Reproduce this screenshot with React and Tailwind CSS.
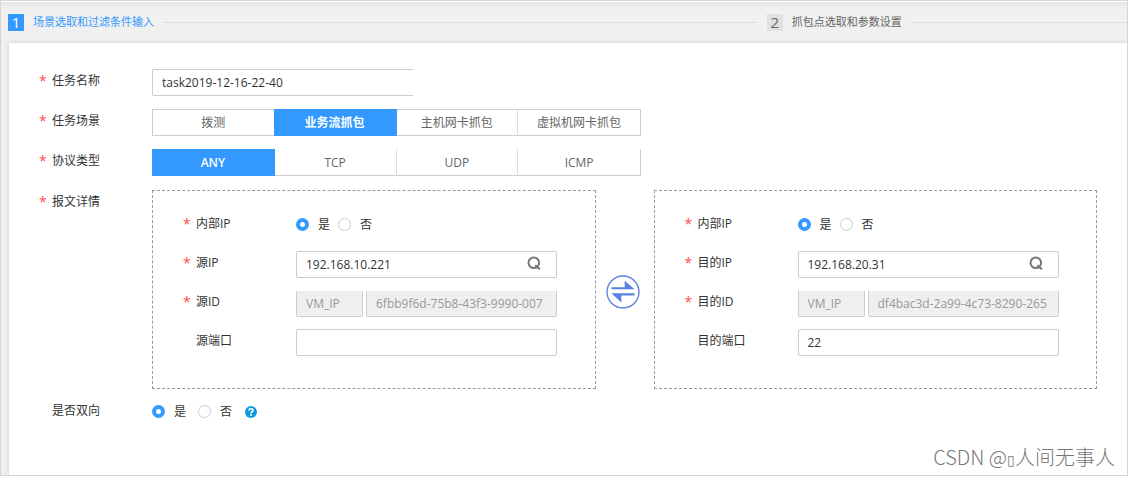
import React, { useState } from 'react';
import clsx from 'clsx';

const SCENES = ['拨测', '业务流抓包', '主机网卡抓包', '虚拟机网卡抓包'];
const PROTOCOLS = ['ANY', 'TCP', 'UDP', 'ICMP'];

const SearchIcon = () => (
  <svg viewBox="0 0 14 14" className="h-[14px] w-[14px]" fill="none" stroke="#777" strokeWidth="2">
    <circle cx="6.8" cy="6.8" r="5.3" />
    <path d="M8.2 9.4 L13 13.2" />
  </svg>
);

const SwapIcon = () => (
  <svg viewBox="0 0 100 100" className="h-[34px] w-[34px]" fill="#5b80e0">
    <circle cx="50" cy="50" r="47" fill="none" stroke="#5b80e0" strokeWidth="4" />
    <path d="M16 36 H55 V17 L84 42 H16 Z" />
    <path d="M84 60 H45 V81 L16 54 H84 Z" />
  </svg>
);

const HelpIcon = () => (
  <svg viewBox="0 0 12 12" className="h-3 w-3">
    <circle cx="6" cy="6" r="6" fill="#0e9bdc" />
    <path d="M4 4.6 C4 2.2 8 2.2 8 4.4 C8 5.8 6 5.6 6 7.2" fill="none" stroke="#fff" strokeWidth="1.7" />
    <rect x="5.1" y="8.2" width="1.8" height="1.7" fill="#fff" />
  </svg>
);

const Row = ({ label, htmlFor, required = true, className, children }) => {
  const Tag = htmlFor ? 'label' : 'span';
  return (
    <div className={clsx('flex', className)}>
      <Tag htmlFor={htmlFor} className="flex w-[113px] shrink-0 text-xs leading-6">
        <span className="w-[13px] text-sm leading-6 text-[#ff4d4d]">{required && '*'}</span>
        {label}
      </Tag>
      {children}
    </div>
  );
};

const Segmented = ({ label, options, value, onChange, className }) => (
  <div
    role="group"
    aria-label={label}
    className={clsx('grid h-[27px] w-[489px] grid-cols-4 border border-[#ccc] text-xs', className)}
  >
    {options.map((option) => (
      <button
        key={option}
        type="button"
        onClick={() => onChange(option)}
        className={clsx(
          '-my-px border-r last:border-r-0',
          option === value
            ? '-ml-px border-[#3399ff] bg-[#3399ff] font-semibold text-white'
            : 'border-[#ddd] text-[#666]'
        )}
      >
        {option}
      </button>
    ))}
  </div>
);

const YesNo = ({ name, label, gap }) => (
  <div role="radiogroup" aria-label={label} className={clsx('flex h-[25px] items-center text-xs', gap)}>
    {['是', '否'].map((text, index) => (
      <label key={text} className="flex items-center gap-[9px]">
        <input
          type="radio"
          name={name}
          defaultChecked={index === 0}
          className="h-[13px] w-[13px] appearance-none rounded-full border border-[#ccc] bg-white checked:border-4 checked:border-[#3399ff]"
        />
        {text}
      </label>
    ))}
  </div>
);

const inputClass = 'h-[27px] rounded-xs border border-[#ccc] px-[9px] text-xs text-[#333] outline-none';
const disabledClass =
  'h-[27px] min-w-0 rounded-xs border border-[#ccc] border-t-transparent bg-[#efefef] bg-clip-padding px-[9px] text-xs text-[#999]';

const Endpoint = ({ id, title, ip, vmId, port }) => (
  <fieldset
    aria-label={title}
    className="flex min-w-[430px] flex-1 flex-col gap-3 border border-dashed border-[#999] pt-[21px] pb-8 pl-[30px]"
  >
    <Row label="内部IP" className="h-[27px]">
      <YesNo name={`${id}-internal`} label="内部IP" gap="gap-2" />
    </Row>
    <Row label={`${title}IP`} htmlFor={`${id}-ip`}>
      <div className="relative">
        <input id={`${id}-ip`} defaultValue={ip} className={clsx(inputClass, 'w-[261px] pr-9')} />
        <button type="button" aria-label="search" className="absolute top-[5px] right-4">
          <SearchIcon />
        </button>
      </div>
    </Row>
    <Row label={`${title}ID`} htmlFor={`${id}-id`}>
      <div className="flex w-[261px] gap-[3px]">
        <input aria-label="type" disabled defaultValue="VM_IP" className={clsx(disabledClass, 'w-[67px] shrink-0')} />
        <input id={`${id}-id`} disabled defaultValue={vmId} className={clsx(disabledClass, 'flex-1')} />
      </div>
    </Row>
    <Row label={`${title}端口`} htmlFor={`${id}-port`} required={false}>
      <input id={`${id}-port`} defaultValue={port} className={clsx(inputClass, 'w-[261px]')} />
    </Row>
  </fieldset>
);

const Step = ({ number, title, active, className }) => (
  <li className={clsx('flex items-center gap-[9px] text-[11px]', active ? 'text-[#3399ff]' : 'text-[#666]', className)}>
    <span
      className={clsx(
        'flex h-[17px] w-4 items-center justify-center text-[15px]',
        active ? 'bg-[#3399ff] text-white' : 'bg-[#e1e1e1]'
      )}
    >
      {number}
    </span>
    {title}
    <span className="h-px flex-1 bg-[#ddd]" />
  </li>
);

const App = () => {
  const [scene, setScene] = useState('业务流抓包');
  const [protocol, setProtocol] = useState('ANY');

  return (
    <div className="flex min-h-screen bg-white pr-[2px] pb-px font-['Open_Sans','Noto_Sans_CJK_SC',sans-serif] text-[#333]">
      <div className="relative flex min-w-0 flex-1 flex-col border border-[#d5d5d5] pt-px">
        <div className="flex flex-1 flex-col bg-[#f0f0f0]">
          <ol className="flex h-[41px] bg-linear-to-b from-[#e6e6e6] via-[#f1f1f1] via-20% to-[#f0f0f0]">
            <Step number={1} title="场景选取和过滤条件输入" active className="w-[68%] pl-[7px] pr-[9px]" />
            <Step number={2} title="抓包点选取和参数设置" className="flex-1" />
          </ol>

          <form className="ml-2 flex-1 bg-white pt-[26px] pr-[30px] pl-[30px] shadow-[0_0_5px_rgba(0,0,0,0.15)] [clip-path:inset(-6px_0_0_-6px)]">
            <div className="flex flex-col gap-[13px]">
              <Row label="任务名称" htmlFor="task-name">
                <input
                  id="task-name"
                  defaultValue="task2019-12-16-22-40"
                  className={clsx(inputClass, 'w-[261px] rounded-r-none border-r-0')}
                />
              </Row>
              <Row label="任务场景">
                <Segmented label="任务场景" options={SCENES} value={scene} onChange={setScene} />
              </Row>
              <Row label="协议类型">
                <Segmented
                  label="协议类型"
                  options={PROTOCOLS}
                  value={protocol}
                  onChange={setProtocol}
                  className="border-t-transparent"
                />
              </Row>
            </div>

            <Row label="报文详情" className="mt-[14px]">
              <div className="flex flex-1 items-center">
                <Endpoint id="source" title="源" ip="192.168.10.221" vmId="6fbb9f6d-75b8-43f3-9990-007" port="" />
                <button type="button" aria-label="swap" className="flex w-[58px] justify-center pt-1 pr-1">
                  <SwapIcon />
                </button>
                <Endpoint id="target" title="目的" ip="192.168.20.31" vmId="df4bac3d-2a99-4c73-8290-265" port="22" />
              </div>
            </Row>

            <Row label="是否双向" required={false} className="mt-[10px]">
              <div className="flex items-center gap-[13px]">
                <YesNo name="bidirectional" label="是否双向" gap="gap-3" />
                <button type="button" aria-label="help">
                  <HelpIcon />
                </button>
              </div>
            </Row>
          </form>
        </div>

        <p className="absolute right-3 bottom-1 font-['Noto_Sans_CJK_SC',sans-serif] text-[20px] leading-7 font-light text-[#777]">
          CSDN @<span className="text-sm">▯</span>人间无事人
        </p>
      </div>
    </div>
  );
};

export default App;
